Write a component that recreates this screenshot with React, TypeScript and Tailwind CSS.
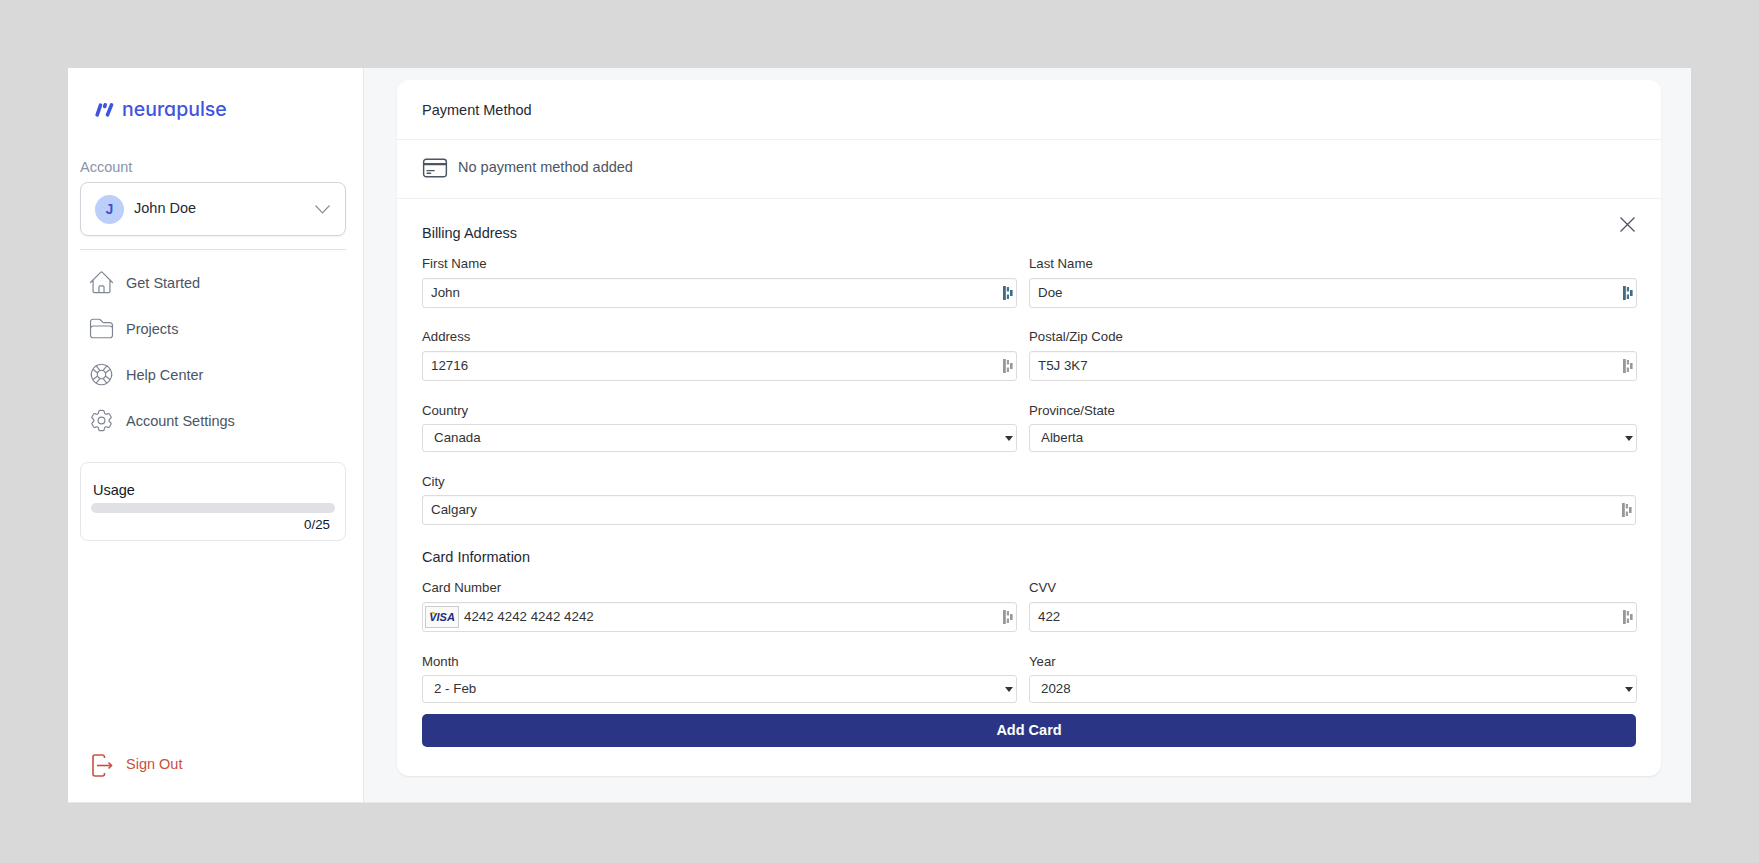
import React from "react";
import {
  HiOutlineHome,
  HiOutlineFolder,
  HiOutlineLifebuoy,
  HiOutlineCog6Tooth,
  HiOutlineCreditCard,
} from "react-icons/hi2";

const FieldIcon = ({ active }: { active?: boolean }) => {
  const c = active ? "#2b5b7a" : "#8d8d8d";
  return (
    <svg width="10" height="14" viewBox="0 0 10 14" className="shrink-0">
      <rect x="0" y="0" width="2.8" height="14" fill={c} opacity="0.9" />
      <rect x="3.8" y="1" width="2.2" height="4.5" fill={c} opacity="0.85" />
      <rect x="3.8" y="8.5" width="2.2" height="4.5" fill={c} opacity="0.85" />
      <rect x="7" y="4" width="2.6" height="6" fill={c} opacity="0.9" />
    </svg>
  );
};

const Label = ({ children }: { children: React.ReactNode }) => (
  <div className="h-5 text-[13.2px] leading-5 text-[#333333]">{children}</div>
);

const TextField = ({
  label,
  value,
  active,
  className,
  left,
  gap = "mt-[4px]",
}: {
  label: string;
  value: string;
  active?: boolean;
  className?: string;
  left?: React.ReactNode;
  gap?: string;
}) => (
  <div className={className}>
    <Label>{label}</Label>
    <div
      className={`${gap} flex h-[30px] items-center rounded-[3px] border border-[#dcdcdc] bg-white pr-[3px] shadow-[inset_0_1px_1px_rgba(0,0,0,0.03)]`}
    >
      {left}
      <input
        readOnly
        value={value}
        className={`min-w-0 flex-1 bg-transparent text-[13.33px] text-[#333333] outline-none ${left ? "pl-[5px]" : "pl-[8px]"}`}
      />
      <FieldIcon active={active} />
    </div>
  </div>
);

const SelectField = ({ label, value, className }: { label: string; value: string; className?: string }) => (
  <div className={className}>
    <Label>{label}</Label>
    <div className="relative mt-[3px]">
      <select
        value={value}
        onChange={() => {}}
        className="block h-[28px] w-full appearance-none rounded-[3px] border border-[#dcdcdc] bg-white pl-[11px] text-[13.33px] text-[#333333] outline-none"
      >
        <option>{value}</option>
      </select>
      <svg width="8" height="5" viewBox="0 0 8 5" className="pointer-events-none absolute right-[4px] top-[12px]">
        <path d="M0 0h8L4 5z" fill="#333333" />
      </svg>
    </div>
  </div>
);

const NavItem = ({ icon, label }: { icon: React.ReactNode; label: string }) => (
  <div className="flex h-[46px] items-center">
    <div className="flex w-[46px] justify-center pb-[3px] pr-[4px]">{icon}</div>
    <span className="text-[14.5px] text-[#4b5563]">{label}</span>
  </div>
);

const iconCls = "text-[#7f8594]";

export default function App() {
  return (
    <div
      className="h-[863px] w-[1759px] overflow-hidden bg-[#d9d9d9] pl-[68px] pt-[68px]"
      style={{ fontFamily: '"Liberation Sans", Arial, sans-serif' }}
    >
      <div className="flex h-[735px] w-[1623px] border-b border-[#e5e7eb]">
        {/* Sidebar */}
        <aside className="flex w-[296px] shrink-0 flex-col border-r border-[#e5e7eb] bg-white pb-[25px] pl-[12px] pr-[17px] pt-[30px]">
          <div className="flex h-[22px] items-center pl-[15px]">
            <svg width="19" height="15" viewBox="0 0 19 15" className="shrink-0">
              <g stroke="#3f55e0" strokeWidth="3.6" strokeLinecap="round" fill="none">
                <path d="M2.2 12.8L5.5 3.2" />
                <path d="M10.2 2.8L9.7 4.5" />
                <path d="M12.5 12.8L16.5 2.8" />
              </g>
            </svg>
            <span
              className="ml-[8px] text-[19.5px] font-medium leading-[22px] text-[#3f55e0] [font-feature-settings:'cv11']"
              style={{ fontFamily: "Inter, sans-serif" }}
            >
              neurapulse
            </span>
          </div>

          <div className="mt-[37px] h-5 text-[14.5px] leading-5 text-[#8b93a7]">Account</div>
          <div className="mt-[5px] flex h-[54px] items-center rounded-[8px] border border-[#d1d5db] bg-white pl-[14px] pr-[15px] shadow-[0_1px_2px_rgba(0,0,0,0.05)]">
            <div className="flex h-[29px] w-[29px] items-center justify-center rounded-full bg-[#bccffb] text-[14px] font-bold text-[#3f55cc]">
              J
            </div>
            <span className="ml-[10px] flex-1 text-[14.5px] text-[#1f2937]">John Doe</span>
            <svg width="15" height="9" viewBox="0 0 15 9" fill="none">
              <path d="M0.5 0.5L7.5 8L14.5 0.5" stroke="#858b99" strokeWidth="1.1" />
            </svg>
          </div>
          <div className="mt-[13px] h-px bg-[#e0e2e7]" />

          <nav className="mt-[11px] flex flex-col">
            <NavItem icon={<HiOutlineHome size={27} strokeWidth={1.05} className={iconCls} />} label="Get Started" />
            <NavItem icon={<HiOutlineFolder size={27} strokeWidth={1.05} className={iconCls} />} label="Projects" />
            <NavItem icon={<HiOutlineLifebuoy size={27} strokeWidth={1.05} className={iconCls} />} label="Help Center" />
            <NavItem icon={<HiOutlineCog6Tooth size={27} strokeWidth={1.05} className={iconCls} />} label="Account Settings" />
          </nav>

          <div className="mt-[17px] h-[79px] rounded-[8px] border border-[#e5e7eb] bg-white px-[10px] pt-[17px]">
            <div className="ml-[2px] h-5 text-[14.5px] leading-5 text-[#111827]">Usage</div>
            <div className="mt-[3px] h-[10px] rounded-full bg-[#dfe1e7]" />
            <div className="mr-[5px] mt-[2px] h-5 text-right text-[13.33px] leading-5 text-[#111827]">0/25</div>
          </div>

          <div className="mt-auto flex h-6 items-center">
            <div className="flex w-[46px] justify-center pr-[2px]">
              <svg width="21" height="23" viewBox="0 0 21 23" fill="none" stroke="#c9503f" strokeWidth="1.6">
                <path d="M12.5 4V2.8A2 2 0 0 0 10.5 1H3A2 2 0 0 0 1 3v17a2 2 0 0 0 2 2h7.5a2 2 0 0 0 2-2v-1" />
                <path d="M5 11.5H19.5" />
                <path d="M16.5 8.5l3 3-3 3" />
              </svg>
            </div>
            <span className="text-[14.5px] text-[#c9503f]">Sign Out</span>
          </div>
        </aside>

        {/* Main */}
        <main className="flex-1 overflow-hidden bg-[#f6f7f9] pl-[33px] pr-[30px] pt-[12px]">
          <div className="h-[696px] rounded-[12px] bg-white shadow-[0_1px_2px_rgba(0,0,0,0.08)]">
            <div className="flex h-[60px] items-center border-b border-[#eff0f3] pl-[25px] pt-[2px] text-[14.5px] text-[#1f2937]">
              Payment Method
            </div>
            <div className="flex h-[59px] items-center border-b border-[#f0f1f6] pb-[3px] pl-[24px]">
              <HiOutlineCreditCard size={28} strokeWidth={1.25} className="text-[#4b5563]" />
              <span className="ml-[9px] text-[14.5px] text-[#4b5563]">No payment method added</span>
            </div>

            <div className="relative pl-[25px] pt-[24px]">
              <svg width="15" height="15" viewBox="0 0 15 15" className="absolute right-[26px] top-[18px]" fill="none" stroke="#4b5563" strokeWidth="1.3">
                <path d="M0.5 0.5L14.5 14.5M14.5 0.5L0.5 14.5" />
              </svg>

              <div className="h-5 text-[14.5px] leading-5 text-[#1f2937]">Billing Address</div>

              <div className="mt-[11px] grid w-[1215px] grid-cols-[595px_608px] gap-x-[12px]">
                <TextField label="First Name" value="John" active />
                <TextField label="Last Name" value="Doe" active />
                <TextField className="mt-[19px]" label="Address" value="12716" />
                <TextField className="mt-[19px]" label="Postal/Zip Code" value="T5J 3K7" />
                <SelectField className="mt-[20px]" label="Country" value="Canada" />
                <SelectField className="mt-[20px]" label="Province/State" value="Alberta" />
              </div>

              <TextField className="mt-[20px] w-[1214px]" gap="mt-[3px]" label="City" value="Calgary" />

              <div className="mt-[22px] h-5 text-[14.5px] leading-5 text-[#1f2937]">Card Information</div>

              <div className="mt-[11px] grid w-[1215px] grid-cols-[595px_608px] gap-x-[12px]">
                <TextField
                  label="Card Number"
                  value="4242 4242 4242 4242"
                  left={
                    <div className="relative ml-[2px] flex h-[22px] w-[34px] shrink-0 items-center justify-center overflow-hidden border border-[#cccccc] bg-[#fafafa]">
                      <svg width="6" height="3" viewBox="0 0 6 3" className="absolute left-[3px] top-[5px]">
                        <path d="M0 0h5.5L6 3C4.5 1.5 2.5 0.5 0 0z" fill="#e0a526" />
                      </svg>
                      <span className="text-[11px] font-bold italic leading-none text-[#1f2a7c]">VISA</span>
                    </div>
                  }
                />
                <TextField label="CVV" value="422" />
                <SelectField className="mt-[20px]" label="Month" value="2 - Feb" />
                <SelectField className="mt-[20px]" label="Year" value="2028" />
              </div>

              <button className="mt-[11px] flex h-[33px] w-[1214px] items-center justify-center rounded-[5px] bg-[#2b3585] text-[14.5px] font-bold text-white">
                Add Card
              </button>
            </div>
          </div>
        </main>
      </div>
    </div>
  );
}
